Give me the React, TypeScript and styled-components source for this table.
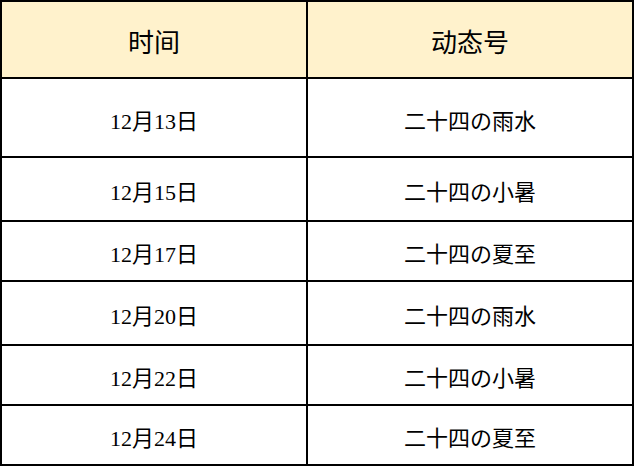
import React from "react";
import styled, { createGlobalStyle } from "styled-components";

const Global = createGlobalStyle`
  html, body { margin: 0; padding: 0; background: #ffffff; }
  body { font-family: "Liberation Serif", "Noto Sans CJK SC", serif; }
`;

const Table = styled.div`
  display: grid;
  grid-template-columns: 304px 324px;
  gap: 2px;
  padding: 2px;
  background: #000000;
  width: max-content;
`;

const Cell = styled.div<{ $head?: boolean; $h: number }>`
  height: ${(p) => p.$h}px;
  display: flex;
  align-items: center;
  justify-content: center;
  background: ${(p) => (p.$head ? "#fff2cc" : "#ffffff")};
  color: #000000;
  font-family: "Liberation Serif", "Noto Sans CJK SC", serif;
  font-size: ${(p) => (p.$head ? 26 : 22)}px;
  font-weight: 400;
  padding-top: ${(p) => (p.$head ? 1 : 2)}px;
  box-sizing: border-box;
`;

const rows = [
  { d: "12月13日", t: "二十四の雨水", h: 77 },
  { d: "12月15日", t: "二十四の小暑", h: 62 },
  { d: "12月17日", t: "二十四の夏至", h: 58 },
  { d: "12月20日", t: "二十四の雨水", h: 62 },
  { d: "12月22日", t: "二十四の小暑", h: 58 },
  { d: "12月24日", t: "二十四の夏至", h: 58 },
];

export default function App() {
  return (
    <>
      <Global />
      <Table>
        <Cell $head $h={75}>时间</Cell>
        <Cell $head $h={75}>动态号</Cell>
        {rows.map((r, i) => (
          <React.Fragment key={i}>
            <Cell $h={r.h}>{r.d}</Cell>
            <Cell $h={r.h}>{r.t}</Cell>
          </React.Fragment>
        ))}
      </Table>
    </>
  );
}
